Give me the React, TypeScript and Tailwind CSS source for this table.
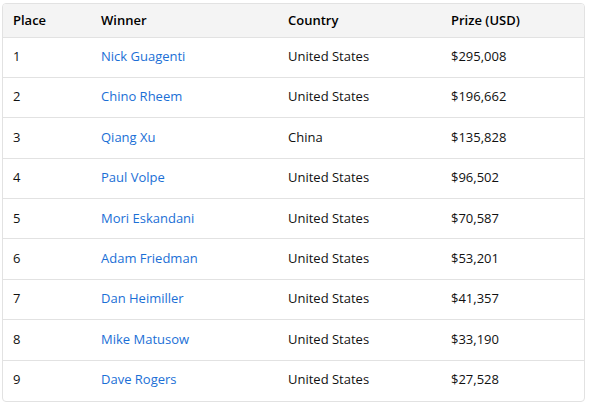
const results = [
  { place: 1, winner: "Nick Guagenti", country: "United States", prize: "$295,008" },
  { place: 2, winner: "Chino Rheem", country: "United States", prize: "$196,662" },
  { place: 3, winner: "Qiang Xu", country: "China", prize: "$135,828" },
  { place: 4, winner: "Paul Volpe", country: "United States", prize: "$96,502" },
  { place: 5, winner: "Mori Eskandani", country: "United States", prize: "$70,587" },
  { place: 6, winner: "Adam Friedman", country: "United States", prize: "$53,201" },
  { place: 7, winner: "Dan Heimiller", country: "United States", prize: "$41,357" },
  { place: 8, winner: "Mike Matusow", country: "United States", prize: "$33,190" },
  { place: 9, winner: "Dave Rogers", country: "United States", prize: "$27,528" },
];

export default function App() {
  return (
    <div className="h-[406px] w-[596px] bg-white pl-[2px] pt-[3px] font-['Open_Sans',sans-serif] text-[13px] text-[#111]">
      <div className="w-[583px] overflow-hidden rounded-[4px] border border-[#e2e2e2]">
        <table className="w-full border-collapse">
          <thead>
            <tr className="h-[33px] bg-[#f4f4f4] text-left text-black">
              <th className="w-[98px] pl-[10px] font-semibold">Place</th>
              <th className="w-[187px] font-semibold">Winner</th>
              <th className="w-[163px] font-semibold">Country</th>
              <th className="font-semibold">Prize (USD)</th>
            </tr>
          </thead>
          <tbody>
            {results.map((r) => (
              <tr key={r.place} className="h-[40.4px] border-t border-[#e2e2e2]">
                <td className="pl-[10px] pb-[1px]">{r.place}</td>
                <td className="pb-[1px] text-[#1b6fd6]">{r.winner}</td>
                <td className="pb-[1px]">{r.country}</td>
                <td className="pb-[1px]">{r.prize}</td>
              </tr>
            ))}
          </tbody>
        </table>
      </div>
    </div>
  );
}
